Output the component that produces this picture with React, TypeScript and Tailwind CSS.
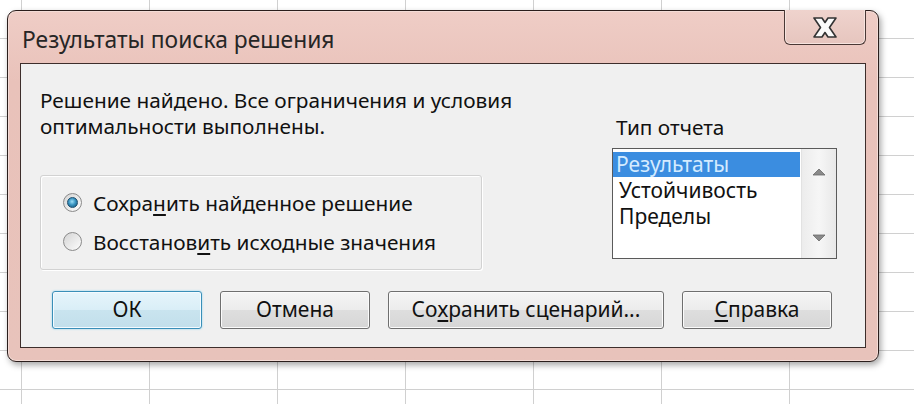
import React from "react";

const font = { fontFamily: '"Noto Sans", "Open Sans", sans-serif' };

function Btn({ children, w, primary }: { children: React.ReactNode; w: string; primary?: boolean }) {
  return (
    <div
      className={
        "h-[38px] flex items-center justify-center rounded-[3px] border text-[21px] text-[#111] " +
        w +
        " " +
        (primary
          ? "border-[#3a8fb8] bg-[linear-gradient(to_bottom,#e6f5fb_0%,#d9eef7_50%,#c9e4ef_50%,#c2dfeb_100%)] shadow-[inset_0_0_0_1px_#f4fbff,0_0_2px_#7fd0f0]"
          : "border-[#6f6f6f] bg-[linear-gradient(to_bottom,#f5f5f5_0%,#ececec_50%,#dedede_50%,#d6d6d6_100%)] shadow-[inset_0_0_0_1px_#fbfbfb]")
      }
    >
      {children}
    </div>
  );
}

function Radio({ checked, children }: { checked?: boolean; children: React.ReactNode }) {
  return (
    <div className="h-[39px] flex items-center">
      <div className="w-[19px] h-[19px] rounded-full border border-[#8a8a8a] bg-[linear-gradient(to_bottom_right,#d4d4d4,#fdfdfd)] flex items-center justify-center">
        {checked && (
          <div className="w-[11px] h-[11px] rounded-full border border-[#1c4e6e] bg-[radial-gradient(circle_at_45%_40%,#9fe0f8_0%,#3a95c2_45%,#0f4c70_100%)]" />
        )}
      </div>
      <div className="ml-[11px] text-[20.8px] text-[#111] leading-[26px]">{children}</div>
    </div>
  );
}

export default function App() {
  return (
    <div
      style={font}
      className="w-[914px] h-[404px] overflow-hidden bg-white bg-[linear-gradient(to_right,#d0d0d0_1px,transparent_1px),linear-gradient(to_bottom,#d0d0d0_1px,transparent_1px)] bg-[size:128px_39px] bg-[position:21px_38px] pt-[10px] pl-[7px]"
    >
      <div className="w-[872px] h-[352px] rounded-[9px] border border-[#2a1e1c] bg-[linear-gradient(to_bottom,#efcdc6_0%,#e9c2ba_20%,#e8c3bb_100%)] shadow-[2px_3px_6px_rgba(0,0,0,0.35),inset_0_0_0_1px_#f3dcd6] flex flex-col">
        <div className="h-[52px] flex items-start justify-between">
          <div className="pl-[14px] pt-[14px] text-[22.8px] leading-[30px] text-[#262626]">Результаты поиска решения</div>
          <div className="-mt-[1px] mr-[12px] w-[82px] h-[35px] rounded-b-[6px] border border-t-0 border-[#4a3835] bg-[linear-gradient(to_bottom,#efd3cd,#e6c5be)] shadow-[inset_0_-1px_0_#f6e3de,inset_1px_0_0_#f6e3de,inset_-1px_0_0_#f6e3de] flex items-center justify-center">
            <svg width="24" height="21" viewBox="0 0 24 21">
              <path
                d="M1 1 H9 L12 5.5 L15 1 H23 L16.5 10.5 L23 20 H15 L12 15.5 L9 20 H1 L7.5 10.5 Z"
                fill="#fbfbfb"
                stroke="#333333"
                strokeWidth="1.6"
                strokeLinejoin="round"
              />
            </svg>
          </div>
        </div>
        <div className="mx-[12px] h-[285px] border border-[#3d2e2b] bg-[#f0f0f0] flex flex-col">
          <div className="flex">
            <div className="pl-[19px] pt-[23px]">
              <div className="text-[20.8px] leading-[26px] text-[#111]">
                Решение найдено. Все ограничения и условия
                <br />
                оптимальности выполнены.
              </div>
              <div className="mt-[36px] w-[442px] h-[95px] rounded-[3px] border border-[#d2d2d2] shadow-[inset_1px_1px_0_#ffffff,1px_1px_0_#ffffff] pt-[7px] pl-[22px]">
                <Radio checked>
                  Сохра<span className="underline underline-offset-[3px]">н</span>ить найденное решение
                </Radio>
                <Radio>
                  Восстанов<span className="underline underline-offset-[3px]">и</span>ть исходные значения
                </Radio>
              </div>
            </div>
            <div className="ml-auto mr-[28px] pt-[50px]">
              <div className="pl-[4px] text-[20.8px] leading-[26px] text-[#111]">Тип отчета</div>
              <div className="mt-[8px] w-[225px] h-[111px] border border-[#5a5a5a] bg-white flex">
                <div className="flex-1 pt-[3px] text-[21px] leading-[26px] text-[#111]">
                  <div className="mr-[1px] h-[25px] leading-[25px] bg-[#3b8de0] text-[#d4ebff] pl-[3px]">Результаты</div>
                  <div className="pl-[6px]">Устойчивость</div>
                  <div className="pl-[6px]">Пределы</div>
                </div>
                <div className="w-[35px] bg-[linear-gradient(to_right,#ececec,#f6f6f6,#e8e8e8)] border-l border-[#e2e2e2] flex flex-col items-center justify-between pt-[19px] pb-[16px]">
                  <svg width="14" height="8" viewBox="0 0 14 8">
                    <path d="M1 7 L7 1 L13 7 Z" fill="#8a8a8a" stroke="#6a6a6a" strokeWidth="0.8" />
                  </svg>
                  <svg width="14" height="8" viewBox="0 0 14 8">
                    <path d="M1 1 L7 7 L13 1 Z" fill="#8a8a8a" stroke="#6a6a6a" strokeWidth="0.8" />
                  </svg>
                </div>
              </div>
            </div>
          </div>
          <div className="mt-[21px] pl-[31px] flex gap-[18px]">
            <Btn w="w-[150px]" primary>
              ОК
            </Btn>
            <Btn w="w-[150px]">Отмена</Btn>
            <Btn w="w-[276px]">
              Со<span className="underline underline-offset-[3px]">х</span>ранить сценарий...
            </Btn>
            <Btn w="w-[150px]">
              <span className="underline underline-offset-[3px]">С</span>правка
            </Btn>
          </div>
        </div>
      </div>
    </div>
  );
}
